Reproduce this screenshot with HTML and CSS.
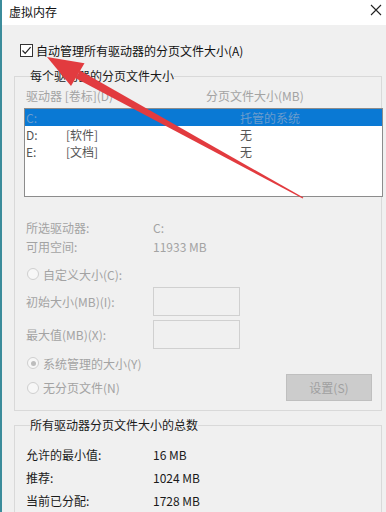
FILE: index.html
```html
<!DOCTYPE html>
<html lang="zh-CN">
<head>
    <meta charset="UTF-8">
    <title>虚拟内存</title>
    <link rel="stylesheet" href="styles.css">
</head>
<body>
    <div class="window">
        <div class="titlebar">
            <span class="title">虚拟内存</span>
            <svg class="close" width="12" height="12" viewBox="0 0 12 12">
                <path d="M1 1 L11 11 M11 1 L1 11" stroke="#222" stroke-width="1.1" fill="none"/>
            </svg>
        </div>
        <div class="content">
            <label class="auto-row">
                <span class="checkbox">
                    <svg width="11" height="11" viewBox="0 0 11 11">
                        <path d="M1.5 5.5 L4.2 8.3 L9.6 2.2" stroke="#222" stroke-width="1.2" fill="none"/>
                    </svg>
                </span>
                自动管理所有驱动器的分页文件大小(A)
            </label>

            <fieldset class="group group-drives">
                <legend>每个驱动器的分页文件大小</legend>
                <div class="list-head">
                    <span class="col-drive">驱动器 [卷标](D)</span>
                    <span class="col-size-head">分页文件大小(MB)</span>
                </div>
                <div class="drive-list">
                    <div class="drive-row selected">
                        <span class="c1">C:</span><span class="c2"></span><span class="c3">托管的系统</span>
                    </div>
                    <div class="drive-row">
                        <span class="c1">D:</span><span class="c2">[软件]</span><span class="c3">无</span>
                    </div>
                    <div class="drive-row">
                        <span class="c1">E:</span><span class="c2">[文档]</span><span class="c3">无</span>
                    </div>
                </div>

                <div class="info-row first">
                    <span class="label">所选驱动器:</span><span>C:</span>
                </div>
                <div class="info-row">
                    <span class="label">可用空间:</span><span>11933 MB</span>
                </div>

                <div class="radio-row custom">
                    <span class="radio"></span>自定义大小(C):
                </div>
                <div class="input-row">
                    <span class="label">初始大小(MB)(I):</span><span class="textbox"></span>
                </div>
                <div class="input-row">
                    <span class="label">最大值(MB)(X):</span><span class="textbox"></span>
                </div>
                <div class="radio-row system">
                    <span class="radio checked"></span>系统管理的大小(Y)
                </div>
                <div class="radio-row last">
                    <span class="radio"></span>无分页文件(N)
                    <button class="set-button" disabled>设置(S)</button>
                </div>
            </fieldset>

            <fieldset class="group group-total">
                <legend>所有驱动器分页文件大小的总数</legend>
                <div class="total-row">
                    <span class="label">允许的最小值:</span><span>16 MB</span>
                </div>
                <div class="total-row">
                    <span class="label">推荐:</span><span>1024 MB</span>
                </div>
                <div class="total-row">
                    <span class="label">当前已分配:</span><span>1728 MB</span>
                </div>
            </fieldset>
        </div>

        <!-- red annotation arrow drawn over the dialog -->
        <svg class="arrow" width="386" height="512" viewBox="0 0 386 512">
            <polygon points="47,57 71,86 84.5,63.2" fill="#e23b3f"/>
            <polygon points="75.7,78.3 79.9,70.5 303.3,197.6 302.7,198.4" fill="#e23b3f"/>
        </svg>
    </div>
</body>
</html>
```

FILE: styles.css
```css
body {
    margin: 0;
    padding: 0;
    width: 386px;
    height: 512px;
    overflow: hidden;
    font-family: "Noto Sans CJK SC", "Liberation Sans", sans-serif;
    font-size: 12px;
    color: #1a1a1a;
    background-color: #f0f0f0;
}

.window {
    position: relative;
    height: 512px;
    border-left: 2px solid #3b8c9b;
    background-color: #f0f0f0;
}

/* Title bar */
.titlebar {
    height: 25px;
    display: flex;
    justify-content: space-between;
    align-items: center;
    padding: 0 4px 0 7px;
    background-color: #ffffff;
}

.title {
    font-size: 12px;
    color: #111;
    margin-top: -2px;
}

.close {
    margin-top: -6px;
}

.content {
    padding: 18px 4px 0 12px;
}

/* Auto manage checkbox */
.auto-row {
    display: flex;
    align-items: center;
    height: 15px;
    padding-left: 6px;
    color: #111;
}

.checkbox {
    width: 11px;
    height: 11px;
    border: 1px solid #333;
    background-color: #fff;
    margin-right: 3px;
    display: flex;
    align-items: center;
    justify-content: center;
}

/* Group boxes */
.group {
    margin: 10px 0 0 0;
    padding: 4px 0 9px 9px;
    border: 1px solid #d9d9d9;
    min-width: 0;
}

.group legend {
    padding: 0;
    margin-left: 6px;
    line-height: 16px;
    color: #1a1a1a;
}

.group-drives {
    color: #a3a3a3;
}

.list-head {
    display: flex;
    height: 16px;
    line-height: 16px;
    padding-left: 2px;
}

.col-drive {
    width: 180px;
}

.drive-list {
    margin: 4px -2px 0 0;
    height: 87px;
    border: 1px solid #8c8c8c;
    background-color: #ffffff;
    color: #555;
}

.drive-row {
    display: flex;
    height: 17px;
    line-height: 17px;
    padding-left: 1px;
}

.drive-row.selected {
    background-color: #0a79d4;
    color: #6a9ccc;
}

.c1 {
    width: 40px;
}

.c2 {
    width: 174px;
}

.info-row {
    display: flex;
    height: 19px;
    line-height: 19px;
    padding-left: 2px;
}

.info-row.first {
    margin-top: 21px;
}

.label {
    width: 127px;
}

.radio-row {
    display: flex;
    align-items: center;
    height: 18px;
    padding-left: 3px;
    margin-top: 8px;
}

.radio-row.custom {
    margin-top: 9px;
}

.radio-row.system {
    margin-top: 5px;
}

.radio {
    width: 10px;
    height: 10px;
    border: 1px solid #cfcfcf;
    border-radius: 50%;
    background-color: #f7f7f7;
    margin-right: 4px;
    display: flex;
    align-items: center;
    justify-content: center;
}

.radio.checked::after {
    content: "";
    width: 5px;
    height: 5px;
    border-radius: 50%;
    background-color: #bdbdbd;
}

.input-row {
    display: flex;
    align-items: center;
    height: 29px;
    padding-left: 2px;
    margin-top: 4px;
}

.input-row .label {
    width: 127px;
}

.textbox {
    width: 85px;
    height: 27px;
    border: 1px solid #d0d0d0;
    background-color: #f0f0f0;
}

.radio-row.last {
    height: 27px;
    margin-top: 2px;
}

.set-button {
    margin-left: auto;
    margin-right: 9px;
    width: 86px;
    height: 27px;
    border: 1px solid #bfbfbf;
    background-color: #cccccc;
    color: #a0a0a0;
    font-family: inherit;
    font-size: 12px;
}

.group-total {
    margin-top: 6px;
    padding-top: 10px;
    color: #1a1a1a;
}

.total-row {
    display: flex;
    height: 23px;
    line-height: 23px;
    padding-left: 2px;
}

.arrow {
    position: absolute;
    left: -2px;
    top: 0;
    pointer-events: none;
}
```
